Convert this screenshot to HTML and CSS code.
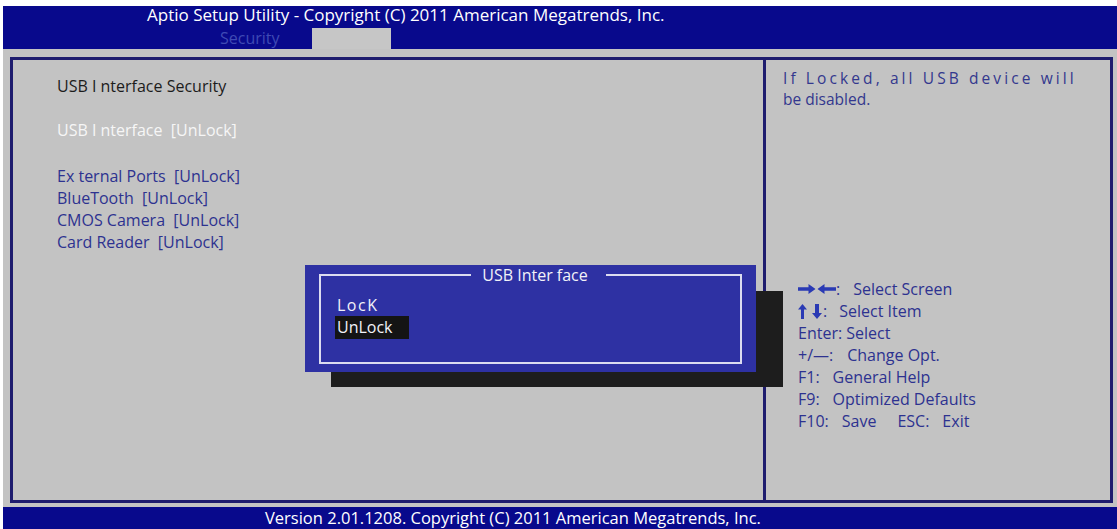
FILE: index.html
```html
<!DOCTYPE html>
<html lang="en">
<head>
<meta charset="utf-8">
<title>Aptio Setup Utility</title>
<link rel="stylesheet" href="styles.css">
</head>
<body>
<div class="screen">
  <header class="topbar">
    <div class="title">Aptio Setup Utility - Copyright (C) 2011 American Megatrends, Inc.</div>
    <nav class="tabs">
      <span class="tab">Security</span>
      <span class="tab active"></span>
    </nav>
  </header>
  <main class="body">
    <div class="frame">
      <section class="left">
        <div class="heading">USB I nterface Security</div>
        <div class="current">USB I nterface&nbsp; [UnLock]</div>
        <ul class="items">
          <li>Ex ternal Ports&nbsp; [UnLock]</li>
          <li>BlueTooth&nbsp; [UnLock]</li>
          <li>CMOS Camera&nbsp; [UnLock]</li>
          <li>Card Reader&nbsp; [UnLock]</li>
        </ul>
        <div class="dialog-shadow"></div>
        <div class="dialog">
          <fieldset class="dialog-frame">
            <legend class="dialog-title">USB Inter face</legend>
            <div class="option lock">LocK</div>
            <div class="option"><span class="chosen">UnLock</span></div>
          </fieldset>
        </div>
      </section>
      <aside class="right">
        <p class="desc"><span class="spaced">If Locked, all USB device will</span><br>be disabled.</p>
        <ul class="keys">
          <li><svg class="arr-lr" width="38" height="10" viewBox="0 0 38 10"><path d="M0 3.3h10.5V0l7 5-7 5V6.7H0z"/><path d="M38 3.3H26.5V0l-7 5 7 5V6.7H38z"/></svg>:<span class="g1">Select Screen</span></li>
          <li><svg class="arr-ud" width="25" height="15" viewBox="0 0 25 15"><path d="M4.5 0L9 5.5H6V15H3V5.5H0z"/><path d="M19 15l-5-6h3V0h4v9h3z"/></svg>:<span class="g2">Select Item</span></li>
          <li>Enter: Select</li>
          <li>+/—:<span class="g3">Change Opt.</span></li>
          <li>F1:<span class="g4">General Help</span></li>
          <li>F9:<span class="g4">Optimized Defaults</span></li>
          <li>F10:<span class="g5">Save</span><span class="g6">ESC:</span><span class="g5">Exit</span></li>
        </ul>
      </aside>
    </div>
  </main>
  <footer class="footer">Version 2.01.1208. Copyright (C) 2011 American Megatrends, Inc.</footer>
</div>
</body>
</html>
```

FILE: styles.css
```css
* { box-sizing: border-box; }

html, body {
  margin: 0;
  padding: 0;
  background: #ffffff;
}

body {
  font-family: "Open Sans", "Noto Sans", sans-serif;
  width: 1117px;
  height: 529px;
  overflow: hidden;
}

.screen {
  padding: 6px 0 0 3px;
  height: 529px;
  display: flex;
  flex-direction: column;
}

/* ---------- top bar ---------- */
.topbar {
  height: 43px;
  background: #08098c;
  display: flex;
  flex-direction: column;
}

.title {
  height: 18px;
  line-height: 18px;
  padding-left: 144px;
  color: #ffffff;
  font-size: 17px;
  white-space: nowrap;
}

.tabs {
  flex: 1;
  display: flex;
  align-items: flex-end;
  padding-left: 217px;
}

.tab {
  font-size: 16px;
  line-height: 22px;
  height: 22px;
  color: #3f4ab4;
}

.tab.active {
  width: 79px;
  height: 21px;
  margin-left: 32px;
  background: #c6c6c6;
}

/* ---------- body ---------- */
.body {
  height: 458px;
  background: #c3c3c3;
  padding: 8px 4px 4px 7px;
}

.frame {
  height: 446px;
  border: 3px solid #1e1c6e;
  display: grid;
  grid-template-columns: 750px 1fr;
}

.left {
  position: relative;
  padding: 15px 0 0 44px;
  font-size: 16px;
  line-height: 22px;
}

.heading {
  color: #1c1c1c;
}

.current {
  margin-top: 22px;
  color: #f6f6f6;
}

.items {
  list-style: none;
  margin: 24px 0 0;
  padding: 0;
  color: #2d3290;
}

/* ---------- popup dialog ---------- */
.dialog-shadow {
  position: absolute;
  left: 318px;
  top: 231px;
  width: 452px;
  height: 96px;
  background: #1d1d1d;
}

.dialog {
  position: absolute;
  left: 292px;
  top: 205px;
  width: 451px;
  height: 107px;
  background: #2e31a3;
  padding: 1px 14px 0 14px;
}

.dialog-frame {
  margin: 0;
  padding: 0 0 0 16px;
  min-inline-size: 0;
  height: 98px;
  border: 2px solid #dcdcf0;
}

.dialog-title {
  margin: 0 auto;
  padding: 0 18px 0 11px;
  font-size: 16px;
  line-height: 18px;
  color: #f2f2f8;
}

.option {
  font-size: 16px;
  line-height: 21px;
  color: #f2f2f8;
}

.option.lock {
  margin-top: 11px;
  letter-spacing: 1.5px;
}

.chosen {
  display: inline-block;
  line-height: 23px;
  background: #141414;
  padding: 0 16px 0 2px;
  margin-left: -2px;
}

/* ---------- right help panel ---------- */
.right {
  border-left: 3px solid #1e1c6e;
  padding: 8px 0 0 17px;
  color: #2d3290;
}

.desc {
  margin: 0;
  font-size: 15.5px;
  line-height: 21px;
  color: #33388e;
}

.spaced {
  letter-spacing: 3.1px;
}

.keys {
  list-style: none;
  margin: 168px 0 0;
  padding: 0 0 0 15px;
  font-size: 16px;
  line-height: 22px;
  white-space: nowrap;
}

.keys svg {
  fill: #2a3ab4;
}

.arr-lr {
  vertical-align: 1px;
}

.arr-ud {
  vertical-align: -2px;
}

.g1 { margin-left: 13px; }
.g2 { margin-left: 12px; }
.g3 { margin-left: 14px; }
.g4 { margin-left: 13px; }
.g5 { margin-left: 13px; }
.g6 { margin-left: 21px; }

/* ---------- footer ---------- */
.footer {
  height: 22px;
  background: #08098c;
  color: #ffffff;
  font-size: 16.5px;
  line-height: 22px;
  padding-left: 262px;
  white-space: nowrap;
}
```
